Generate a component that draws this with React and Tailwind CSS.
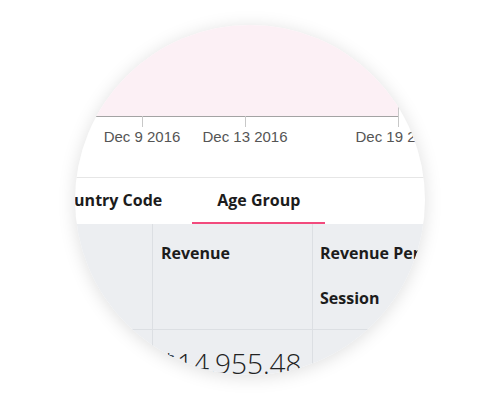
import React from "react"

const TICKS = [
  { x: 67, label: "Dec 9 2016" },
  { x: 170, label: "Dec 13 2016" },
  { x: 323, label: "Dec 19 2016" },
]

function Chart() {
  return (
    <div className="h-[153px] border-b border-[#e6e6e6]">
      <svg width="350" height="152" className="block">
        <rect x="0" y="0" width="324" height="91" fill="#fcf0f5" />
        <line x1="0" y1="91.5" x2="324" y2="91.5" stroke="#a3a3a3" strokeWidth="1" />
        <line x1="323.5" y1="82" x2="323.5" y2="102" stroke="#c8c8c8" strokeWidth="1" />
        {TICKS.map((t) => (
          <g key={t.label}>
            <line x1={t.x + 0.5} y1="91" x2={t.x + 0.5} y2="102" stroke="#c8c8c8" strokeWidth="1" />
            <text
              x={t.x}
              y="117"
              textAnchor="middle"
              fill="#555"
              fontSize="15"
              fontFamily="'Liberation Sans', Arial, sans-serif"
            >
              {t.label}
            </text>
          </g>
        ))}
      </svg>
    </div>
  )
}

function Tabs() {
  return (
    <div className="flex h-[46px] ml-[-46px] font-['Open_Sans',sans-serif] text-[16px] font-bold text-[#1c1c1c]">
      <div className="flex items-center px-[25px] border-b-2 border-transparent whitespace-nowrap">Country Code</div>
      <div className="flex items-center px-[25px] ml-[5px] border-b-2 border-[#f24a7d] whitespace-nowrap">Age Group</div>
    </div>
  )
}

function Table() {
  return (
    <div className="bg-[#eceef1] font-['Open_Sans',sans-serif] text-[#1c1c1c]">
      <div className="flex border-b border-[#dcdfe3]">
        <div className="w-[78px] border-r border-[#dcdfe3]" />
        <div className="w-[160px] border-r border-[#dcdfe3] pl-2 pt-[7px] pb-[8px] text-[16px] font-bold leading-[45px]">
          Revenue
        </div>
        <div className="flex-1 pl-[7px] pt-[7px] pb-[8px] text-[16px] font-bold leading-[45px] whitespace-nowrap">
          Revenue Per
          <br />
          Session
        </div>
      </div>
      <div className="flex h-[60px]">
        <div className="w-[78px] border-r border-[#dcdfe3]" />
        <div className="w-[160px] border-r border-[#dcdfe3] pl-[8px] pt-[12px] text-[28px] font-light text-[#222] whitespace-nowrap">
          $14,955.48
        </div>
        <div className="flex-1" />
      </div>
    </div>
  )
}

export default function App() {
  return (
    <div className="w-[500px] h-[400px] bg-white flex items-center justify-center">
      <div className="w-[350px] h-[350px] rounded-full overflow-hidden bg-white shadow-[0_2px_18px_rgba(0,0,0,0.13)]">
        <Chart />
        <Tabs />
        <Table />
      </div>
    </div>
  )
}
